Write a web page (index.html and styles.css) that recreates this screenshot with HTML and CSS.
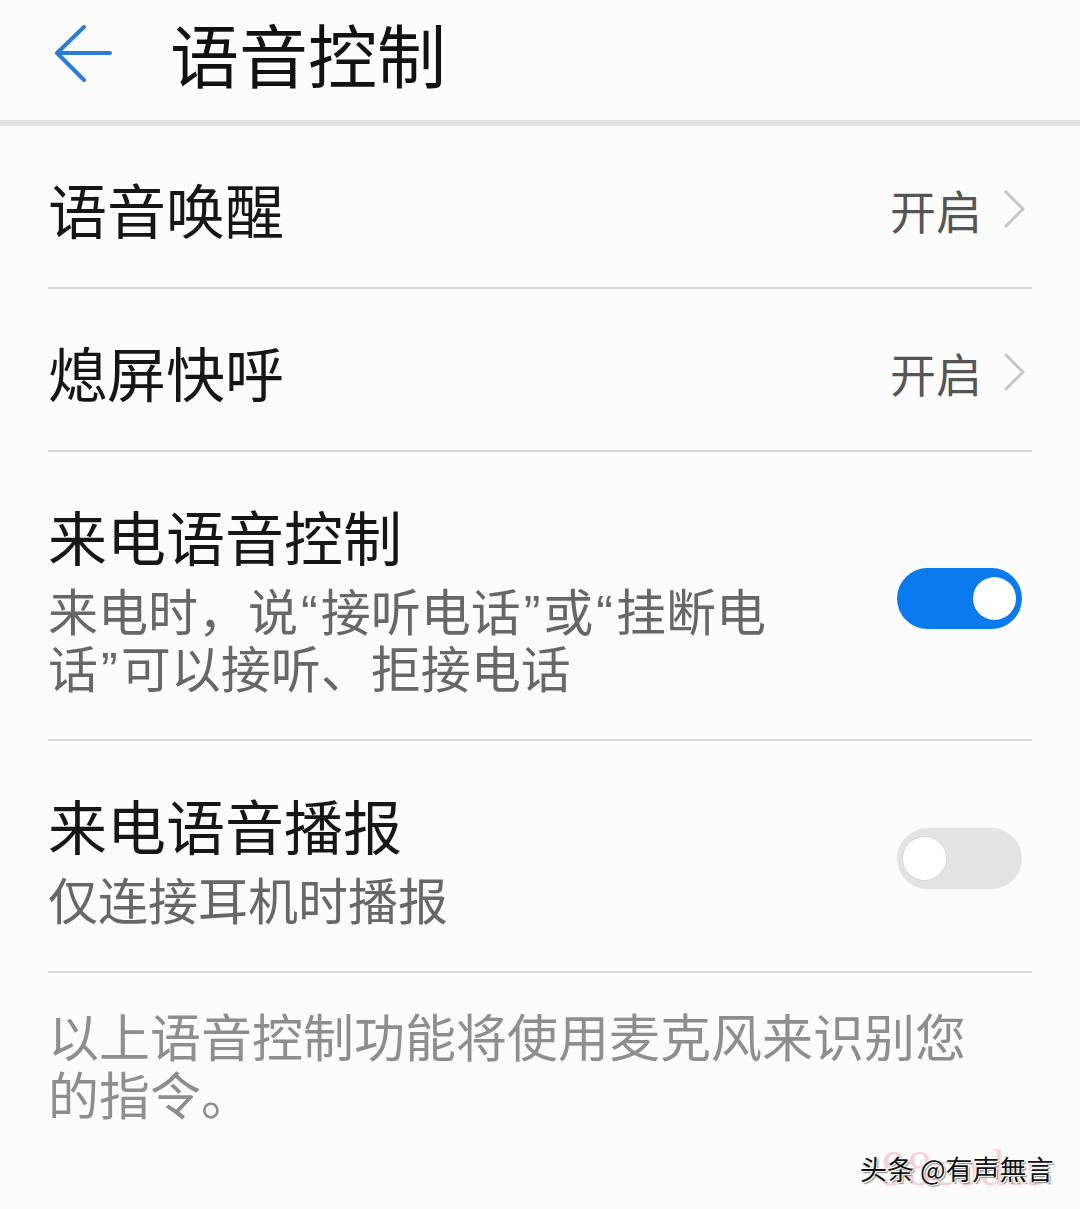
FILE: index.html
```html
<!DOCTYPE html>
<html lang="zh-CN">
<head>
    <meta charset="UTF-8">
    <meta name="viewport" content="width=device-width, initial-scale=1.0">
    <title>语音控制</title>
    <link rel="stylesheet" href="styles.css">
</head>
<body>

<div class="header">
    <svg class="back" width="58" height="58" viewBox="0 0 58 58">
        <path d="M3 28 H56 M30 2 L3 28 L30 55" fill="none" stroke="#2a7ed6" stroke-width="4" stroke-linecap="round" stroke-linejoin="round"/>
    </svg>
    <h1>语音控制</h1>
</div>

<div class="list">
    <div class="row single">
        <div class="text"><div class="title">语音唤醒</div></div>
        <span class="value">开启</span>
        <svg class="chevron" width="22" height="40" viewBox="0 0 22 40">
            <path d="M2 2 L20 20 L2 38" fill="none" stroke="#c6c6c6" stroke-width="3"/>
        </svg>
    </div>

    <div class="row single">
        <div class="text"><div class="title">熄屏快呼</div></div>
        <span class="value">开启</span>
        <svg class="chevron" width="22" height="40" viewBox="0 0 22 40">
            <path d="M2 2 L20 20 L2 38" fill="none" stroke="#c6c6c6" stroke-width="3"/>
        </svg>
    </div>

    <div class="row">
        <div class="text">
            <div class="title">来电语音控制</div>
            <div class="sub">来电时，说<span class="q">“</span>接听电话<span class="q">”</span>或<span class="q">“</span>挂断电话<span class="q">”</span>可以接听、拒接电话</div>
        </div>
        <span class="switch on"><span class="knob"></span></span>
    </div>

    <div class="row">
        <div class="text">
            <div class="title">来电语音播报</div>
            <div class="sub">仅连接耳机时播报</div>
        </div>
        <span class="switch"><span class="knob"></span></span>
    </div>
</div>

<p class="note">以上语音控制功能将使用麦克风来识别您的指令。</p>

<div class="watermark">
    <span class="mark-bg">98codes</span>
    <span class="mark">头条 @有声無言</span>
</div>

</body>
</html>
```

FILE: styles.css
```css
body {
    margin: 0;
    background-color: #fcfcfc;
    font-family: "Noto Sans CJK SC", "Noto Sans", sans-serif;
    color: #1a1a1a;
    height: 1209px;
    overflow: hidden;
    position: relative;
}
.header {
    display: flex;
    align-items: center;
    height: 114px;
    padding: 0 0 6px 54px;
    border-bottom: 6px solid #e3e3e3;
}
.back {
    margin-bottom: 6px;
}
h1 {
    margin: 0 0 8px 58px;
    font-size: 69px;
    font-weight: normal;
    line-height: 80px;
    color: #111;
}
.list {
    padding: 0 48px;
}
.row {
    display: flex;
    align-items: center;
    padding: 49px 0 44px;
    border-bottom: 2px solid #d8d8d8;
}
.row.single {
    padding: 48px 0 43px;
}
.text {
    flex: 1;
    padding-right: 100px;
}
.title {
    font-size: 59px;
    line-height: 70px;
    color: #161616;
}
.sub {
    margin-top: 10px;
    font-size: 50px;
    line-height: 57px;
    color: #676767;
}
/* narrow western quotes, the CJK font draws them full width */
.q {
    font-family: "Liberation Sans", sans-serif;
    line-height: 0;
    padding: 0 3px;
}
.value {
    font-size: 46px;
    line-height: 60px;
    color: #555;
    margin-right: 21px;
}
.chevron {
    margin-right: 7px;
}
.switch {
    display: flex;
    align-items: center;
    justify-content: flex-start;
    width: 125px;
    height: 61px;
    padding: 0 6px;
    box-sizing: border-box;
    border-radius: 31px;
    background-color: #e3e3e3;
    margin-right: 10px;
}
.switch.on {
    justify-content: flex-end;
    background-color: #0a7bee;
}
.knob {
    width: 43px;
    height: 43px;
    border-radius: 50%;
    background-color: #fff;
    box-shadow: 0 0 0 1px #dadada;
}
.switch.on .knob {
    box-shadow: none;
}
.note {
    margin: 0;
    padding: 33px 92px 0 48px;
    font-size: 51px;
    line-height: 58px;
    color: #8e8e8e;
}
.watermark {
    position: absolute;
    right: 20px;
    bottom: 10px;
    width: 200px;
    height: 60px;
}
.mark-bg {
    position: absolute;
    left: 22px;
    top: 0;
    font-family: "Liberation Serif", serif;
    font-size: 50px;
    color: rgba(235, 170, 180, 0.5);
}
.mark {
    position: absolute;
    left: 0;
    top: 10px;
    font-size: 27px;
    color: #111;
    text-shadow: 1px 1px 0 #fff, -1px -1px 0 #fff, 2px 2px 1px #888;
    white-space: nowrap;
}
```
